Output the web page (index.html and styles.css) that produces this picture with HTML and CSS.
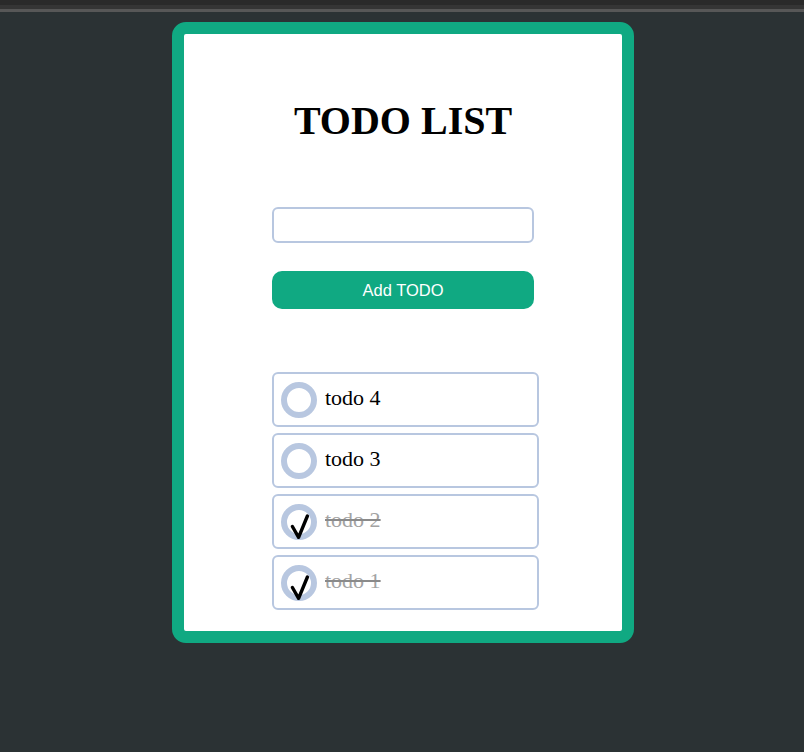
FILE: index.html
```html
<!DOCTYPE html>
<html>
<head>
<meta charset="utf-8">
<title>TODO LIST</title>
<link rel="stylesheet" href="styles.css">
</head>
<body>
<div class="topbar"></div>
<main class="page">
  <section class="card">
    <h1 class="title">TODO LIST</h1>
    <form class="form" onsubmit="return false;">
      <input class="field" type="text">
      <button class="add" type="submit">Add TODO</button>
    </form>
    <ul class="list">
      <li class="item">
        <span class="circle"></span>
        <span class="label">todo 4</span>
      </li>
      <li class="item">
        <span class="circle"></span>
        <span class="label">todo 3</span>
      </li>
      <li class="item done">
        <span class="circle"><svg class="check" viewBox="0 0 20 32" width="20" height="32"><path d="M2.4 16.5 L8.6 27.3 L17.4 6" fill="none" stroke="#000" stroke-width="3.4" stroke-linecap="round" stroke-linejoin="round"/></svg></span>
        <span class="label">todo 2</span>
      </li>
      <li class="item done">
        <span class="circle"><svg class="check" viewBox="0 0 20 32" width="20" height="32"><path d="M2.4 16.5 L8.6 27.3 L17.4 6" fill="none" stroke="#000" stroke-width="3.4" stroke-linecap="round" stroke-linejoin="round"/></svg></span>
        <span class="label">todo 1</span>
      </li>
    </ul>
  </section>
</main>
</body>
</html>
```
FILE: styles.css
```css
html, body {
  margin: 0;
  padding: 0;
}
body {
  background: #2b3234;
  font-family: "Liberation Serif", "Times New Roman", serif;
  min-height: 752px;
}
.topbar {
  height: 4px;
  background: #353535;
  border-top: 5px solid #2a2a2a;
  border-bottom: 3px solid #575757;
}
.page {
  display: flex;
  justify-content: center;
  padding: 10px 0 0 2px;
}
.card {
  width: 438px;
  height: 597px;
  background: #fff;
  border: 12px solid #10a982;
  border-radius: 14px;
  display: flex;
  flex-direction: column;
  align-items: center;
}
.title {
  margin: 64px 0 0;
  font-size: 40px;
  line-height: 46px;
  font-weight: bold;
  color: #000;
}
.form {
  margin-top: 63px;
  width: 262px;
  display: flex;
  flex-direction: column;
  gap: 28px;
}
.field {
  box-sizing: border-box;
  width: 262px;
  height: 36px;
  border: 2px solid #b8c7e0;
  border-radius: 6px;
  margin: 0;
  padding: 0 8px;
  outline: none;
  background: #fff;
}
.add {
  box-sizing: border-box;
  width: 262px;
  height: 38px;
  margin: 0;
  border: none;
  border-radius: 10px;
  background: #10a982;
  color: #fff;
  font-family: "Liberation Sans", Arial, sans-serif;
  font-size: 16.5px;
  padding: 0;
}
.list {
  list-style: none;
  margin: 63px 0 0 5px;
  padding: 0;
  width: 267px;
  display: flex;
  flex-direction: column;
  gap: 6px;
}
.item {
  box-sizing: border-box;
  height: 55px;
  border: 2px solid #b8c7e0;
  border-radius: 6px;
  padding: 0 7px;
  display: flex;
  align-items: center;
  gap: 8px;
}
.circle {
  box-sizing: border-box;
  width: 36px;
  height: 36px;
  border: 6px solid #b8c7e0;
  border-radius: 50%;
  flex: none;
  position: relative;
}
.check {
  position: absolute;
  left: 3px;
  top: 0;
}
.label {
  font-size: 22px;
  color: #000;
  margin-bottom: 3px;
}
.done .label {
  color: #a3a3a3;
  text-decoration: line-through;
  text-decoration-color: #8a8a8a;
}
```
